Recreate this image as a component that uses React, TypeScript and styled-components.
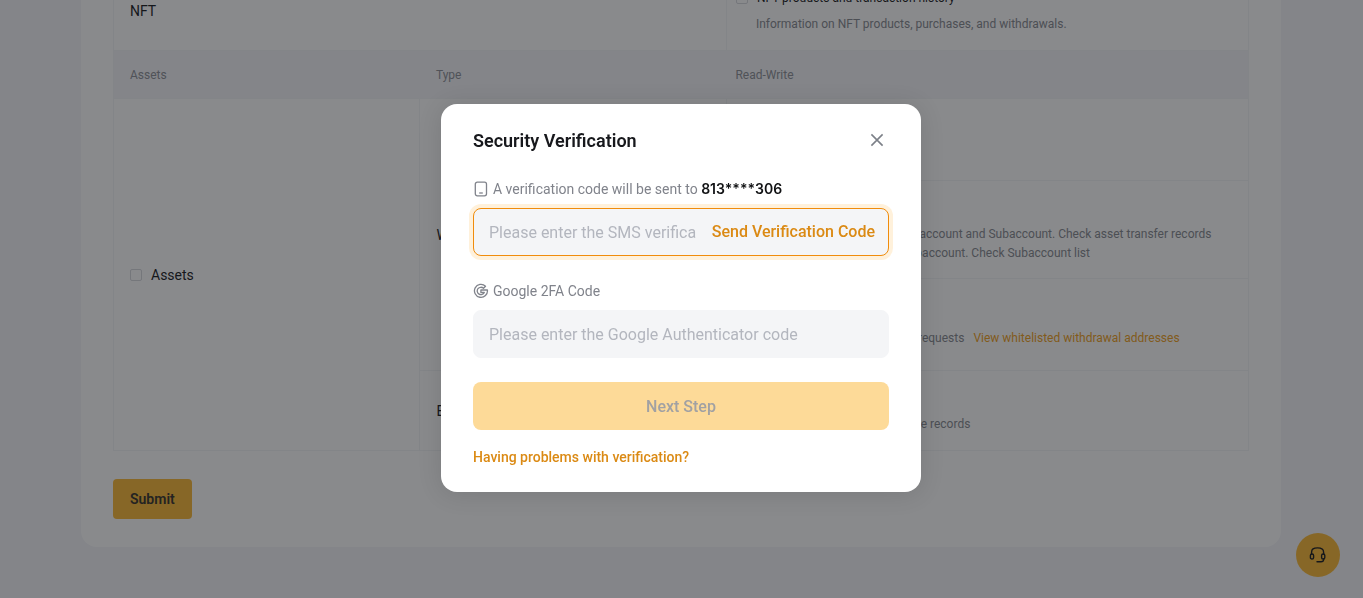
import React from 'react';
import styled, { createGlobalStyle } from 'styled-components';

const GlobalStyle = createGlobalStyle`
  *, *::before, *::after { box-sizing: border-box; }
  body {
    margin: 0;
    font-family: Roboto, "Liberation Sans", sans-serif;
    font-size: 14px;
    color: #17181c;
    background: #f4f5f9;
  }
  button, input { font-family: inherit; }
`;

const Page = styled.div`
  min-height: 100vh;
  padding: 0 17px 50px 16px;
  overflow: hidden;
`;

const Card = styled.main`
  max-width: 1200px;
  margin: -30px auto 0;
  padding: 0 32px 28px;
  border-radius: 16px;
  background: #ffffff;
`;

const PermissionTable = styled.table`
  width: 100%;
  table-layout: fixed;
  border-collapse: collapse;
  border: 1px solid #f3f4f6;
`;

const Row = styled.tr<{ $height: number }>`
  height: ${(p) => p.$height}px;
`;

const HeadCell = styled.th<{ $tight?: boolean }>`
  padding: 0 ${(p) => (p.$tight ? 9 : 16)}px;
  font-size: 12px;
  font-weight: 400;
  text-align: left;
  color: #8c8f96;
  background: #f4f5f9;
`;

const Cell = styled.td<{ $tight?: boolean }>`
  padding: 0 ${(p) => (p.$tight ? 9 : 16)}px;
  border: 1px solid #f3f4f6;
  vertical-align: middle;
`;

const CheckLabel = styled.label<{ $small?: boolean }>`
  display: flex;
  align-items: center;
  gap: 9px;
  font-size: ${(p) => (p.$small ? 12 : 14)}px;
  line-height: 22px;
  white-space: nowrap;
`;

const Checkbox = styled.input`
  appearance: none;
  flex: none;
  width: 12px;
  height: 12px;
  margin: 0;
  border: 1px solid #d6d8dd;
  border-radius: 2px;
  background: transparent;
`;

const Description = styled.div`
  margin-top: 6px;
  padding-left: 20px;
  font-size: 12px;
  line-height: 19px;
  white-space: nowrap;
  color: #85888f;
`;

const InlineLink = styled.a`
  margin-left: 9px;
  color: #f0a020;
  text-decoration: none;
`;

const SubmitButton = styled.button`
  height: 40px;
  margin-top: 28px;
  padding: 0 17px;
  border: 0;
  border-radius: 4px;
  font-size: 14px;
  font-weight: 600;
  color: #33302a;
  background: #fbb934;
`;

const SupportButton = styled.button`
  position: fixed;
  right: 23px;
  bottom: 21px;
  display: grid;
  place-items: center;
  width: 44px;
  height: 44px;
  padding: 0;
  border: 0;
  border-radius: 50%;
  color: #17181c;
  background: #fbb934;
`;

const Overlay = styled.div`
  position: fixed;
  inset: 0;
  display: flex;
  align-items: center;
  justify-content: center;
  padding: 0 1px 2px 0;
  background: rgba(20, 22, 26, 0.5);
`;

const Dialog = styled.section`
  width: 480px;
  max-width: 100%;
  padding: 24px 32px;
  border-radius: 16px;
  background: #ffffff;
  box-shadow: 0 2px 24px rgba(0, 0, 0, 0.12);
`;

const DialogHeader = styled.header`
  display: flex;
  align-items: center;
  justify-content: space-between;
`;

const DialogTitle = styled.h2`
  margin: 0;
  font-size: 18px;
  font-weight: 600;
  line-height: 26px;
`;

const CloseButton = styled.button`
  display: grid;
  place-items: center;
  width: 24px;
  height: 24px;
  padding: 0;
  border: 0;
  color: #7c8088;
  background: none;
`;

const Form = styled.form`
  display: flex;
  flex-direction: column;
  gap: 24px;
  margin-top: 24px;
`;

const Field = styled.div`
  display: flex;
  flex-direction: column;
  gap: 8px;
`;

const FieldLabel = styled.label`
  display: flex;
  align-items: center;
  gap: 4px;
  line-height: 22px;
  color: #80838b;
`;

const Phone = styled.strong`
  font-family: Inter, Roboto, sans-serif;
  font-weight: 600;
  color: #111214;
`;

const InputBox = styled.div<{ $active?: boolean }>`
  display: flex;
  align-items: center;
  gap: 16px;
  height: 48px;
  padding: 0 13px 0 15px;
  border: 1px solid ${(p) => (p.$active ? '#f08c0c' : '#f4f5f7')};
  border-radius: 8px;
  background: #f4f5f7;
  box-shadow: ${(p) => (p.$active ? '0 0 0 4px #fff1db' : 'none')};
`;

const TextInput = styled.input`
  flex: 1;
  min-width: 0;
  height: 24px;
  padding: 0;
  border: 0;
  outline: 0;
  font-size: 16px;
  color: #17181c;
  background: none;
  &::placeholder { color: #b3b6be; opacity: 1; }
`;

const SendButton = styled.button`
  flex: none;
  padding: 0;
  border: 0;
  font-size: 16px;
  font-weight: 500;
  line-height: 24px;
  color: #db8a14;
  background: none;
`;

const NextButton = styled.button`
  height: 48px;
  border: 0;
  border-radius: 8px;
  font-size: 16px;
  font-weight: 500;
  color: #a1a1a3;
  background: #fdda98;
`;

const HelpLink = styled.a`
  display: block;
  margin-top: 16px;
  font-weight: 500;
  line-height: 22px;
  color: #db8a14;
  text-decoration: none;
`;

const CloseIcon = () => (
  <svg width="24" height="24" viewBox="0 0 24 24" fill="none" stroke="currentColor" strokeWidth="1.6" aria-hidden="true">
    <path d="M6.4 5.4 17.6 16.6M17.6 5.4 6.4 16.6" />
  </svg>
);

const PhoneIcon = () => (
  <svg width="16" height="16" viewBox="0 0 16 16" fill="none" stroke="currentColor" strokeWidth="1.3" aria-hidden="true">
    <rect x="2.3" y="1.2" width="11.2" height="13.6" rx="2" />
    <path d="M6.2 12H9.8" />
  </svg>
);

const GoogleIcon = () => (
  <svg width="16" height="16" viewBox="0 0 16 16" fill="none" stroke="currentColor" strokeWidth="1.3" strokeLinejoin="round" aria-hidden="true">
    <path d="M12.5 3.2A6.5 6.5 0 1 0 14.4 7H7.9v2.5h3.4A3.7 3.7 0 1 1 10.5 5.3Z" />
  </svg>
);

const HeadsetIcon = () => (
  <svg width="18" height="18" viewBox="0 0 18 18" fill="none" stroke="currentColor" strokeWidth="1.4" strokeLinecap="round" aria-hidden="true">
    <path d="M2.6 8V6.2C2.6 3.2 4.4 1.9 8.6 1.9s6 1.3 6 4.3V8M14.6 13v.4c0 1.7-.9 2.3-2.6 2.3H8" />
    <rect x="1.4" y="8" width="3.2" height="5" rx="1.6" />
    <rect x="12.6" y="8" width="3.2" height="5" rx="1.6" />
  </svg>
);

type PermissionProps = { title: string; children: React.ReactNode };

const Permission = ({ title, children }: PermissionProps) => (
  <Cell $tight>
    <CheckLabel $small>
      <Checkbox type="checkbox" />
      {title}
    </CheckLabel>
    <Description>{children}</Description>
  </Cell>
);

export default function App() {
  return (
    <>
      <GlobalStyle />
      <Page>
        <Card>
          <PermissionTable>
            <colgroup>
              <col width="27%" />
              <col width="27%" />
              <col width="46%" />
            </colgroup>
            <tbody>
              <Row $height={80}>
                <Cell colSpan={2}>NFT</Cell>
                <Permission title="NFT products and transaction history">
                  Information on NFT products, purchases, and withdrawals.
                </Permission>
              </Row>
              <Row $height={48}>
                <HeadCell>Assets</HeadCell>
                <HeadCell>Type</HeadCell>
                <HeadCell $tight>Read-Write</HeadCell>
              </Row>
              <Row $height={82}>
                <Cell rowSpan={4}>
                  <CheckLabel>
                    <Checkbox type="checkbox" />
                    Assets
                  </CheckLabel>
                </Cell>
                <Cell rowSpan={3}>Wallet</Cell>
                <Permission title="Account">Check account balance</Permission>
              </Row>
              <Row $height={98}>
                <Permission title="Transfer">
                  Transfer assets between Main account and Subaccount. Check asset transfer records
                  <br />
                  Transfer via Subaccount to Subaccount. Check Subaccount list
                </Permission>
              </Row>
              <Row $height={92}>
                <Permission title="Withdraw">
                  Submit and review withdrawal requests
                  <InlineLink href="#whitelist">View whitelisted withdrawal addresses</InlineLink>
                </Permission>
              </Row>
              <Row $height={80}>
                <Cell>Exchange</Cell>
                <Permission title="Exchange">Place orders and view exchange records</Permission>
              </Row>
            </tbody>
          </PermissionTable>
          <SubmitButton type="button">Submit</SubmitButton>
        </Card>
        <SupportButton type="button" aria-label="Customer support">
          <HeadsetIcon />
        </SupportButton>
      </Page>

      <Overlay>
        <Dialog role="dialog" aria-modal="true" aria-labelledby="dialog-title">
          <DialogHeader>
            <DialogTitle id="dialog-title">Security Verification</DialogTitle>
            <CloseButton type="button" aria-label="Close">
              <CloseIcon />
            </CloseButton>
          </DialogHeader>
          <Form>
            <Field>
              <FieldLabel htmlFor="sms-code">
                <PhoneIcon />
                <span>
                  A verification code will be sent to <Phone>813****306</Phone>
                </span>
              </FieldLabel>
              <InputBox $active>
                <TextInput id="sms-code" placeholder="Please enter the SMS verification code" />
                <SendButton type="button">Send Verification Code</SendButton>
              </InputBox>
            </Field>
            <Field>
              <FieldLabel htmlFor="google-code">
                <GoogleIcon />
                <span>Google 2FA Code</span>
              </FieldLabel>
              <InputBox>
                <TextInput id="google-code" placeholder="Please enter the Google Authenticator code" />
              </InputBox>
            </Field>
            <NextButton type="submit" disabled>
              Next Step
            </NextButton>
          </Form>
          <HelpLink href="#help">Having problems with verification?</HelpLink>
        </Dialog>
      </Overlay>
    </>
  );
}
